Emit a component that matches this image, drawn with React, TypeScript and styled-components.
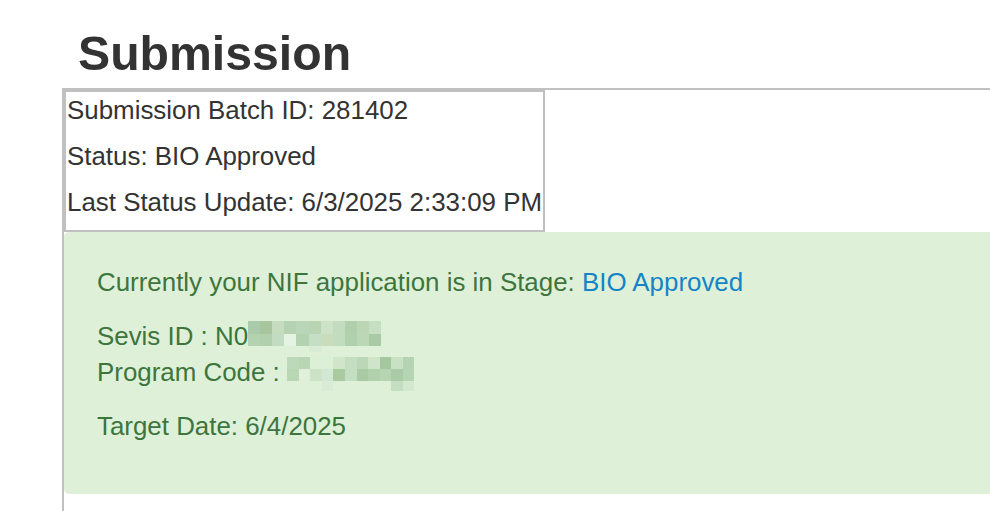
import React, { FC } from 'react';
import styled, { createGlobalStyle } from 'styled-components';

const GlobalStyle = createGlobalStyle`
	html, body {
		margin: 0;
		padding: 0;
		background: #fff;
		overflow: hidden;
	}
	body {
		font-family: 'Liberation Sans', Arial, sans-serif;
		font-size: 25.9px;
		color: #333;
	}
`;

// pixelated blocks hiding personal ids
const sevisCells = [
	['#a9cba9', '#a8c69e', '#c5dcbf', '#b5d3b2', '#b9d7b8', '#b8d4b2', '#cde3c8', '#c4dcbe', '#afcfad', '#bad6b5', '#c6dfc2'],
	['#b3d3b0', '#b1d1ae', '#c2dcc4', '#e4f3e2', '#b3d2af', '#c5dfc6', '#c9dcbc', '#c2dcc0', '#b1d1ae', '#bad7b6', '#a8cba5'],
	['#dff0d8', '#dff0d8', '#dff0d8', '#dff0d8', '#dff0d8', '#d8ecd5', '#dff0d8', '#dff0d8', '#dff0d8', '#dff0d8', '#dff0d8'],
];

const programCells = [
	['#bcd9b9', '#b8d6b4', '#dcefd7', '#dcefd7', '#d1e5c8', '#c4dec1', '#bcd7b7', '#cfe5ca', '#a4c79f', '#c8e0c3', '#b4d3b0'],
	['#b9d6b5', '#e0f0da', '#cde3c8', '#d3e8d4', '#a9cb9f', '#c4dec1', '#a8cba3', '#b1d1ad', '#b8d5b3', '#a9cba6', '#b5d4b2'],
	['#dff0d8', '#dff0d8', '#dff0d8', '#d8ecd5', '#dff0d8', '#dff0d8', '#dff0d8', '#dff0d8', '#dff0d8', '#c4dec1', '#d2e8cf'],
];

const Mosaic: FC<{ cells: string[][]; cell: number; lastRow: number }> = ({ cells, cell, lastRow }) => (
	<MosaicGrid $cols={cells[0].length} $cell={cell} $last={lastRow}>
		{cells.flat().map((c, i) => (
			<MosaicCell key={i} $c={c} />
		))}
	</MosaicGrid>
);

const App: FC = () => {
	return (
		<>
			<GlobalStyle />
			<Title>Submission</Title>
			<Panel>
				<StatusBox>
					<StatusRow>Submission Batch ID: 281402</StatusRow>
					<StatusRow>Status: BIO Approved</StatusRow>
					<StatusRow>Last Status Update: 6/3/2025 2:33:09 PM</StatusRow>
				</StatusBox>
				<Alert>
					<AlertLine>
						Currently your NIF application is in Stage: <StageLink>BIO Approved</StageLink>
					</AlertLine>
					<AlertLine>
						Sevis ID : N0
						<Mosaic cells={sevisCells} cell={12.1} lastRow={6} />
						<br />
						Program Code : <Mosaic cells={programCells} cell={11.6} lastRow={10} />
					</AlertLine>
					<AlertLine>Target Date: 6/4/2025</AlertLine>
				</Alert>
			</Panel>
		</>
	);
};

export default App;

const Title = styled.h1`
	margin: 26px 0 7px 78px;
	font-size: 48.2px;
	font-weight: bold;
	line-height: 1.15;
	color: #333;
`;

const Panel = styled.div`
	margin-left: 62px;
	margin-right: -30px;
	border-left: 2px solid #c0c0c0;
	border-top: 2px solid #c0c0c0;
	height: 421px;
`;

const StatusBox = styled.div`
	display: inline-flex;
	flex-direction: column;
	border: 2px solid #c0c0c0;
	padding: 0 1px;
	vertical-align: top;
`;

const StatusRow = styled.div`
	height: 46px;
	box-sizing: border-box;
	padding-top: 4px;
	line-height: 1.15;
	white-space: nowrap;
`;

const Alert = styled.div`
	background: #dff0d8;
	color: #3c763d;
	border-radius: 5px;
	padding: 32px 33px 32px;
	line-height: 36px;
`;

const AlertLine = styled.p`
	margin: 0 0 18px;
`;

const StageLink = styled.a`
	color: #1484c6;
	text-decoration: none;
	cursor: pointer;
`;

const MosaicGrid = styled.span<{ $cols: number; $cell: number; $last: number }>`
	display: inline-grid;
	vertical-align: top;
	margin-top: 3px;
	margin-bottom: -8px;
	grid-template-columns: repeat(${(p) => p.$cols}, ${(p) => p.$cell}px);
	grid-template-rows: ${(p) => p.$cell}px ${(p) => p.$cell}px ${(p) => p.$last}px;
`;

const MosaicCell = styled.span<{ $c: string }>`
	background: ${(p) => p.$c};
`;
